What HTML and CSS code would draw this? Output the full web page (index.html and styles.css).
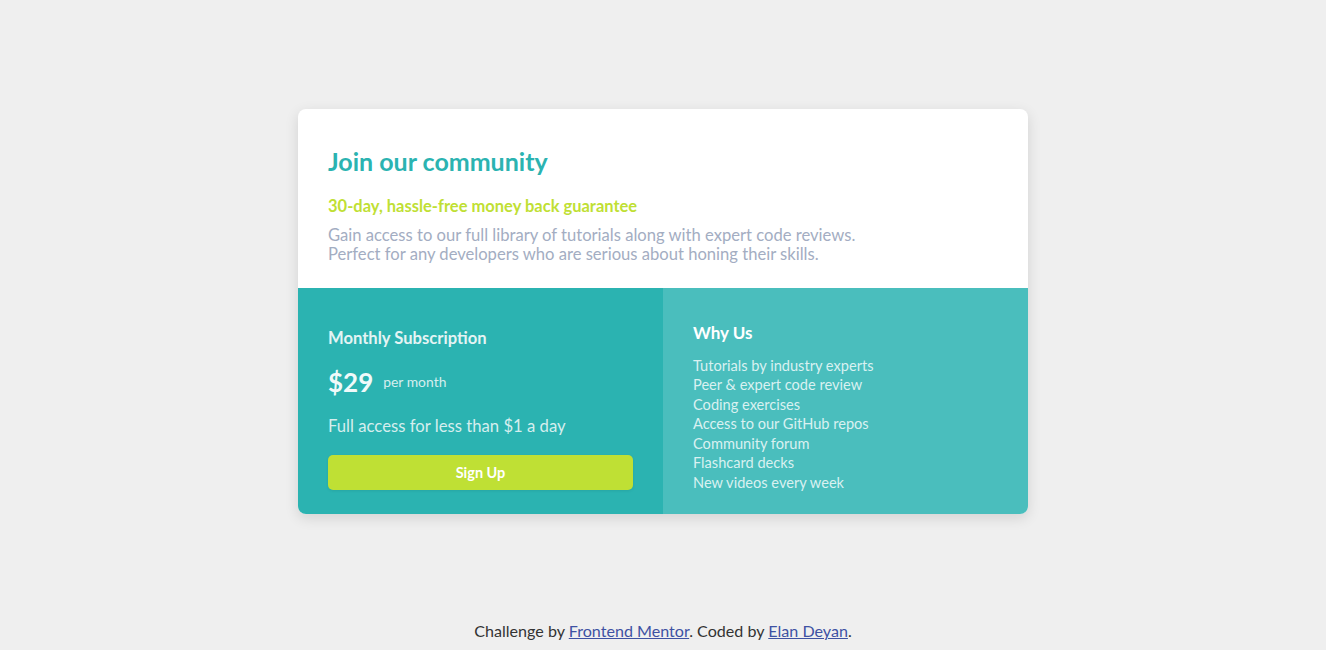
FILE: index.html
```html
<!DOCTYPE html>
<html lang="en">
<head>
<meta charset="utf-8">
<title>Single price grid</title>
<link rel="stylesheet" href="styles.css">
</head>
<body>
<main class="page">
  <div class="card">
    <section class="intro">
      <h1 class="intro-title">Join our community</h1>
      <h2 class="intro-sub">30-day, hassle-free money back guarantee</h2>
      <p class="intro-text">Gain access to our full library of tutorials along with expert code reviews.<br>Perfect for any developers who are serious about honing their skills.</p>
    </section>
    <div class="bottom">
      <section class="sub">
        <h3 class="sub-title">Monthly Subscription</h3>
        <div class="price"><span class="price-amount">$29</span><span class="price-per">per month</span></div>
        <p class="sub-text">Full access for less than $1 a day</p>
        <button class="signup">Sign Up</button>
      </section>
      <section class="why">
        <h3 class="why-title">Why Us</h3>
        <ul class="why-list">
          <li>Tutorials by industry experts</li>
          <li>Peer &amp; expert code review</li>
          <li>Coding exercises</li>
          <li>Access to our GitHub repos</li>
          <li>Community forum</li>
          <li>Flashcard decks</li>
          <li>New videos every week</li>
        </ul>
      </section>
    </div>
  </div>
</main>
<footer class="attribution">Challenge by <a href="#">Frontend Mentor</a>. Coded by <a href="#">Elan Deyan</a>.</footer>
</body>
</html>
```
FILE: styles.css
```css
* { box-sizing: border-box; }
html, body { margin: 0; padding: 0; }
body {
  background: #efefef;
  font-family: "Lato", "Noto Sans", sans-serif;
  min-height: 100vh;
  display: flex;
  flex-direction: column;
}
.page {
  flex: 1;
  display: flex;
  align-items: center;
  justify-content: center;
}
.card {
  width: 730px;
  border-radius: 8px;
  overflow: hidden;
  background: #fff;
  box-shadow: 0 4px 14px rgba(0, 0, 0, 0.12);
}
.intro {
  padding: 36px 30px 24px;
}
.intro-title {
  margin: 0;
  color: #2bb3b1;
  font-size: 25px;
  font-weight: 700;
  line-height: 32px;
}
.intro-sub {
  margin: 19px 0 0;
  color: #c0df34;
  font-size: 16.5px;
  font-weight: 700;
  line-height: 20px;
}
.intro-text {
  margin: 10px 0 0;
  color: #a3adc2;
  font-size: 16.6px;
  line-height: 19px;
}
.bottom {
  display: flex;
}
.sub {
  flex: 1;
  background: #2bb3b1;
  padding: 39px 30px 24px;
  color: #e4f4f4;
}
.sub-title {
  margin: 0;
  font-size: 16.6px;
  font-weight: 700;
  line-height: 22px;
}
.price {
  display: flex;
  align-items: center;
  margin-top: 17px;
}
.price-amount {
  font-size: 26px;
  font-weight: 700;
  line-height: 32px;
  color: #f0fafa;
}
.price-per {
  font-size: 13.9px;
  margin-left: 10px;
  color: #d5eeee;
}
.sub-text {
  margin: 17px 0 0;
  font-size: 16.7px;
  line-height: 22px;
  color: #d5eeee;
}
.signup {
  display: block;
  width: 100%;
  height: 35px;
  margin-top: 18px;
  border: 0;
  border-radius: 5px;
  background: #bfe034;
  color: #fff;
  font-family: inherit;
  font-size: 14.5px;
  font-weight: 700;
  box-shadow: 0 1px 3px rgba(0, 0, 0, 0.08);
}
.why {
  flex: 1;
  background: #4abebd;
  padding: 34px 30px 20px;
  color: #d9f1f1;
}
.why-title {
  margin: 0;
  font-size: 17px;
  font-weight: 700;
  line-height: 22px;
  color: #fff;
}
.why-list {
  list-style: none;
  margin: 12px 0 0;
  padding: 0;
  font-size: 14.6px;
  line-height: 19.5px;
}
.attribution {
  text-align: center;
  font-size: 16.1px;
  line-height: 18px;
  color: #333;
  padding: 0 0 10px;
}
.attribution a {
  color: #3e52a3;
}
```
